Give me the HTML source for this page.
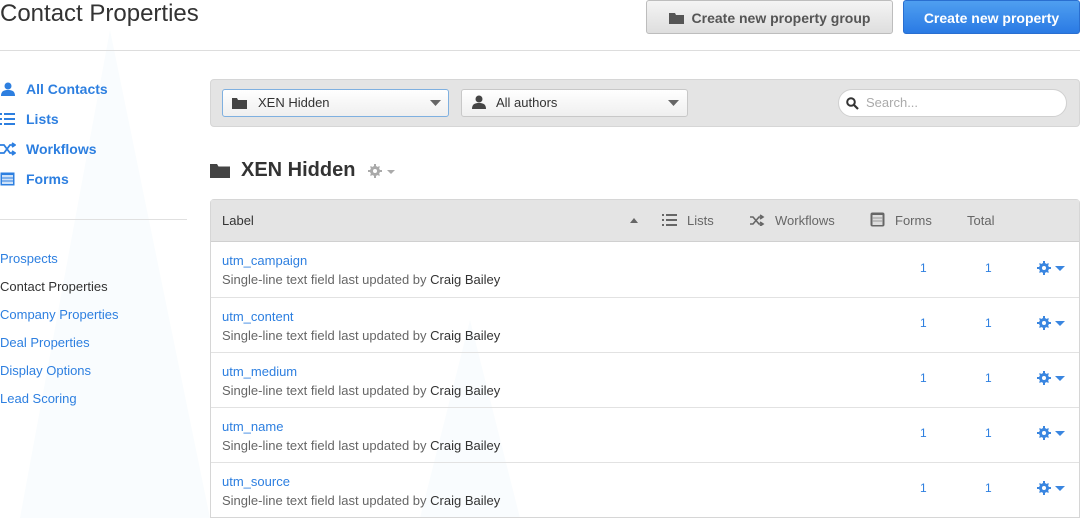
<!DOCTYPE html>
<html><head><style>
*{margin:0;padding:0;box-sizing:border-box}
body{width:1080px;height:518px;overflow:hidden;background:#fff;font-family:"Liberation Sans",sans-serif;position:relative;color:#333}
.a{position:absolute}
h1{position:absolute;left:0;top:0;font-size:24px;font-weight:normal;color:#333;line-height:28px}
.btn{position:absolute;top:0;height:34px;border-radius:3px;font-size:14px;font-weight:bold;line-height:34px;text-align:center}
.side1{position:absolute;left:0;font-size:14px;font-weight:bold;color:#2d7fe0}
.side1 svg{position:absolute;left:0;top:1px}
.side1 span{position:absolute;left:26px;white-space:nowrap}
.side2{position:absolute;left:0;font-size:13px;color:#2d7fe0;white-space:nowrap}
.row{position:absolute;left:211px;width:868px;height:55px;border-top:1px solid #e2e2e2}
.row .n{position:absolute;left:11px;top:11px;font-size:13px;color:#2d7fe0}
.row .d{position:absolute;left:11px;top:30px;font-size:13px;color:#666}
.row .d b{font-weight:normal;color:#333}
.hd{position:absolute;top:213px;font-size:13px;color:#666}
</style></head><body>
<svg class="a" style="left:0;top:0" width="1080" height="518"><polygon points="110,30 210,518 20,518" fill="#f9fcfe"/><polygon points="470,320 520,518 420,518" fill="#f9fcfe"/></svg>
<h1>Contact Properties</h1>
<div class="btn" style="left:646px;width:247px;background:linear-gradient(#f4f4f4,#dedede);border:1px solid #bdbdbd;color:#555"><svg width="15" height="12" style="vertical-align:-1px;margin-right:8px"><path d="M0 1h6l1 2h8v9H0z" fill="#555"/></svg>Create new property group</div>
<div class="btn" style="left:903px;width:177px;background:linear-gradient(#4f9ff0,#2a7ae4);border:1px solid #2a6fd0;color:#fff">Create new property</div>
<div class="a" style="left:0;top:50px;width:1080px;height:1px;background:#ddd"></div>

<div class="side1" style="top:81px"><svg width="16" height="14"><circle cx="8" cy="4" r="3.5" fill="#2d7fe0"/><path d="M1 14c0-5 3-6 7-6s7 1 7 6z" fill="#2d7fe0"/></svg><span>All Contacts</span></div>
<div class="side1" style="top:111px"><svg width="16" height="14"><g fill="#2d7fe0"><rect x="0" y="1" width="2" height="2"/><rect x="0" y="6" width="2" height="2"/><rect x="0" y="11" width="2" height="2"/><rect x="4" y="1" width="11" height="2"/><rect x="4" y="6" width="11" height="2"/><rect x="4" y="11" width="11" height="2"/></g></svg><span>Lists</span></div>
<div class="side1" style="top:141px"><svg width="16" height="14"><path d="M0 3h4l6 8h4M0 11h4l6-8h4M12 1l3 2-3 2M12 9l3 2-3 2" stroke="#2d7fe0" stroke-width="1.8" fill="none"/></svg><span>Workflows</span></div>
<div class="side1" style="top:171px"><svg width="16" height="14"><rect x="0.5" y="0.5" width="14" height="13" fill="#2d7fe0"/><rect x="2" y="3" width="11" height="9" fill="#cfe2f8"/><path d="M2 6h11M2 9h11" stroke="#2d7fe0"/></svg><span>Forms</span></div>
<div class="a" style="left:0;top:219px;width:187px;height:1px;background:#e0e0e0"></div>
<div class="side2" style="top:251px">Prospects</div>
<div class="side2" style="top:279px;color:#333">Contact Properties</div>
<div class="side2" style="top:307px">Company Properties</div>
<div class="side2" style="top:335px">Deal Properties</div>
<div class="side2" style="top:363px">Display Options</div>
<div class="side2" style="top:391px">Lead Scoring</div>

<div class="a" style="left:210px;top:79px;width:870px;height:48px;background:#e4e4e4;border:1px solid #d6d6d6;border-radius:4px"></div>
<div class="a" style="left:222px;top:89px;width:227px;height:28px;background:linear-gradient(#fff,#efefef);border:1px solid #7fb0e0;border-radius:3px;font-size:13px;line-height:26px;padding-left:35px">XEN Hidden</div>
<svg class="a" style="left:232px;top:97px" width="15" height="12"><path d="M0 1h5l1 2h9v9H0z" fill="#444"/></svg>
<svg class="a" style="left:430px;top:100px" width="11" height="6"><path d="M0 0h11L5.5 6z" fill="#666"/></svg>
<div class="a" style="left:461px;top:89px;width:227px;height:28px;background:linear-gradient(#fff,#efefef);border:1px solid #c8c8c8;border-radius:3px;font-size:13px;line-height:26px;padding-left:34px">All authors</div>
<svg class="a" style="left:472px;top:95px" width="14" height="14"><circle cx="7" cy="4" r="3.5" fill="#444"/><path d="M0 14c0-5 3-6 7-6s7 1 7 6z" fill="#444"/></svg>
<svg class="a" style="left:668px;top:100px" width="11" height="6"><path d="M0 0h11L5.5 6z" fill="#666"/></svg>
<div class="a" style="left:838px;top:89px;width:229px;height:28px;background:#fff;border:1px solid #d0d0d0;border-radius:14px;font-size:13px;line-height:26px;padding-left:27px;color:#aaa">Search...</div>
<svg class="a" style="left:846px;top:97px" width="13" height="13"><circle cx="5" cy="5" r="3.8" stroke="#333" stroke-width="2" fill="none"/><path d="M8 8l4 4" stroke="#333" stroke-width="2.2"/></svg>

<svg class="a" style="left:210px;top:163px" width="20" height="15"><path d="M0 1h7l1.5 2.5H20V15H0z" fill="#444"/></svg>
<div class="a" style="left:241px;top:159px;font-size:20px;font-weight:bold;color:#333">XEN Hidden</div>
<svg class="a" style="left:368px;top:164px" width="30" height="14"><g fill="#aaa"><circle cx="7" cy="7" r="5"/><path d="M6 0h2v14H6zM0 6h14v2H0z"/><path d="M2 3l1-1 9 9-1 1zM11 2l1 1-9 9-1-1z"/></g><circle cx="7" cy="7" r="2" fill="#fff"/><path d="M19 6h8l-4 4z" fill="#aaa"/></svg>

<div class="a" style="left:210px;top:199px;width:870px;height:319px;border:1px solid #d6d6d6;border-radius:4px 4px 0 0"></div>
<div class="a" style="left:211px;top:200px;width:868px;height:42px;background:#e4e4e4;border-bottom:1px solid #d0d0d0"></div>
<div class="hd" style="left:222px;color:#333">Label</div>
<svg class="a" style="left:630px;top:218px" width="8" height="5"><path d="M0 5h8L4 0z" fill="#666"/></svg>
<svg class="a" style="left:662px;top:213px" width="16" height="14"><g fill="#666"><rect x="0" y="1" width="2" height="2"/><rect x="0" y="6" width="2" height="2"/><rect x="0" y="11" width="2" height="2"/><rect x="4" y="1" width="11" height="2"/><rect x="4" y="6" width="11" height="2"/><rect x="4" y="11" width="11" height="2"/></g></svg>
<div class="hd" style="left:687px">Lists</div>
<svg class="a" style="left:750px;top:214px" width="15" height="12"><path d="M0 3h3l6 7h3M0 10h3l6-7h3M10 1l3 2-3 2M10 8l3 2-3 2" stroke="#666" stroke-width="1.6" fill="none"/></svg>
<div class="hd" style="left:775px">Workflows</div>
<svg class="a" style="left:870px;top:212px" width="15" height="15"><rect x="0.5" y="0.5" width="14" height="14" rx="2" fill="#666"/><rect x="2.5" y="3" width="10" height="10" fill="#ddd"/><path d="M2 6h11M2 9h11" stroke="#999"/></svg>
<div class="hd" style="left:895px">Forms</div>
<div class="hd" style="left:967px">Total</div>

<div class="row" style="top:242px;border-top:none"><div class="n">utm_campaign</div><div class="d">Single-line text field last updated by <b>Craig Bailey</b></div></div>
<div class="row" style="top:297px"><div class="n">utm_content</div><div class="d">Single-line text field last updated by <b>Craig Bailey</b></div></div>
<div class="row" style="top:352px"><div class="n">utm_medium</div><div class="d">Single-line text field last updated by <b>Craig Bailey</b></div></div>
<div class="row" style="top:407px"><div class="n">utm_name</div><div class="d">Single-line text field last updated by <b>Craig Bailey</b></div></div>
<div class="row" style="top:462px"><div class="n">utm_source</div><div class="d">Single-line text field last updated by <b>Craig Bailey</b></div></div>

<div id="g"></div>
<script>
var ys=[242,297,352,407,462],h='';
ys.forEach(function(y){
h+='<div class="a" style="left:920px;top:'+(y+19)+'px;font-size:12px;color:#2d7fe0">1</div>';
h+='<div class="a" style="left:985px;top:'+(y+19)+'px;font-size:12px;color:#2d7fe0">1</div>';
h+='<svg class="a" style="left:1037px;top:'+(y+19)+'px" width="30" height="14"><g fill="#3a86e0"><circle cx="7" cy="7" r="5"/><path d="M6 0h2v14H6zM0 6h14v2H0z"/><path d="M2 3l1-1 9 9-1 1zM11 2l1 1-9 9-1-1z"/></g><circle cx="7" cy="7" r="2" fill="#fff"/><path d="M18 5h10l-5 5z" fill="#3a86e0"/></svg>';
});
document.getElementById('g').innerHTML=h;
</script>
</body></html>
